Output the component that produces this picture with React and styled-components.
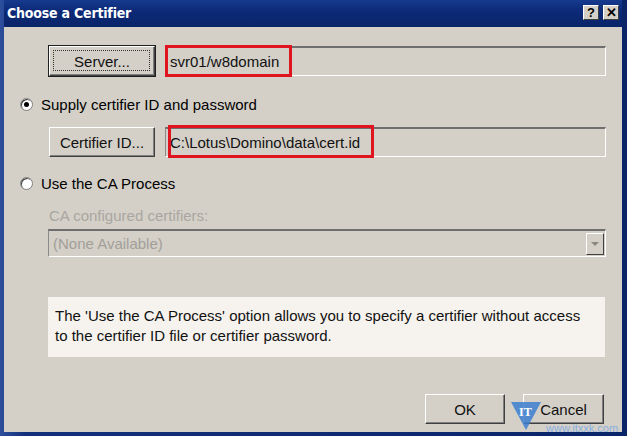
import React from "react";
import styled, { createGlobalStyle } from "styled-components";

const GlobalStyle = createGlobalStyle`
  html, body {
    margin: 0;
    padding: 0;
    background: #0a2468;
  }
  * {
    box-sizing: border-box;
  }
`;

const Window = styled.div`
  width: 627px;
  height: 436px;
  display: flex;
  flex-direction: column;
  padding: 0 5px 4px 4px;
  background: linear-gradient(90deg, #2d4f9c 0%, #12307a 4%, #0a2468 100%);
  font-family: "Liberation Sans", Arial, sans-serif;
  position: relative;
  overflow: hidden;
`;

const TitleBar = styled.div`
  height: 27px;
  display: flex;
  align-items: center;
  justify-content: space-between;
  padding: 0 3px 2px 3px;
  background: linear-gradient(180deg, #163a8e 0%, #0c2a78 40%, #0a2468 100%);
`;

const Title = styled.div`
  color: #fff;
  font-family: "DejaVu Sans Condensed", "Liberation Sans", sans-serif;
  font-weight: bold;
  font-size: 14px;
  letter-spacing: -0.2px;
`;

const TitleButtons = styled.div`
  display: flex;
  gap: 4px;
`;

const CaptionButton = styled.div`
  width: 16px;
  height: 15px;
  background: #d4d0c8;
  border-top: 1px solid #fff;
  border-left: 1px solid #fff;
  border-right: 1px solid #404040;
  border-bottom: 1px solid #404040;
  display: flex;
  align-items: center;
  justify-content: center;
  color: #000;
  font-weight: bold;
  font-size: 13px;
  line-height: 1;
`;

const Client = styled.div`
  flex: 1;
  background: #d4d0c8;
  display: flex;
  flex-direction: column;
  padding: 19px 16px 0 16px;
  font-size: 15px;
  color: #000;
`;

const FieldRow = styled.div`
  display: flex;
  align-items: center;
  gap: 10px;
  padding-left: 29px;
  margin-top: ${(p) => p.$top || 0}px;
`;

const Button = styled.div`
  width: ${(p) => p.$w || 106}px;
  height: 30px;
  display: flex;
  align-items: center;
  justify-content: center;
  background: #d4d0c8;
  font-size: 15px;
  color: #111;
  border-top: 1px solid #fff;
  border-left: 1px solid #fff;
  border-right: 1px solid #404040;
  border-bottom: 1px solid #404040;
  box-shadow: inset -1px -1px 0 #808080;
  position: relative;
  outline: ${(p) => (p.$default ? "1px solid #202020" : "none")};
`;

const FocusRing = styled.span`
  position: absolute;
  inset: 3px 4px 4px 3px;
  border: 1px dotted #333;
`;

const TextField = styled.div`
  flex: 1;
  height: 30px;
  display: flex;
  align-items: center;
  padding-left: 4px;
  background: #d4d0c8;
  border-top: 2px solid #6f6f6f;
  border-left: 1px solid #8a8a8a;
  border-bottom: 1px solid #fff;
  border-right: 1px solid #fff;
  color: #111;
  font-size: 15px;
  position: relative;
`;

const Highlight = styled.span`
  position: absolute;
  left: ${(p) => p.$left}px;
  top: ${(p) => p.$top}px;
  width: ${(p) => p.$w}px;
  height: ${(p) => p.$h}px;
  border: 3px solid #e0141e;
  pointer-events: none;
`;

const RadioRow = styled.div`
  display: flex;
  align-items: center;
  gap: 8px;
  height: 18px;
  margin-top: ${(p) => p.$top}px;
`;

const Radio = styled.span`
  width: 13px;
  height: 13px;
  border-radius: 50%;
  background: #fff;
  border: 1px solid #808080;
  box-shadow: inset 1px 1px 0 #404040;
  display: flex;
  align-items: center;
  justify-content: center;

  &::after {
    content: "";
    width: 5px;
    height: 5px;
    border-radius: 50%;
    background: ${(p) => (p.$checked ? "#000" : "transparent")};
  }
`;

const DisabledLabel = styled.div`
  margin: 16px 0 0 29px;
  height: 16px;
  line-height: 16px;
  color: #a9a6a0;
  font-size: 15px;
`;

const Combo = styled.div`
  margin: 5px 0 0 28px;
  height: 28px;
  display: flex;
  align-items: center;
  justify-content: space-between;
  padding: 0 1px 0 4px;
  border-top: 2px solid #6f6f6f;
  border-left: 1px solid #8a8a8a;
  border-bottom: 1px solid #fff;
  border-right: 1px solid #fff;
  color: #a29f99;
  font-size: 15px;
`;

const DropButton = styled.div`
  width: 18px;
  height: 22px;
  background: #d4d0c8;
  border-top: 1px solid #fff;
  border-left: 1px solid #fff;
  border-right: 1px solid #404040;
  border-bottom: 1px solid #404040;
  display: flex;
  align-items: center;
  justify-content: center;

  &::after {
    content: "";
    border-left: 4px solid transparent;
    border-right: 4px solid transparent;
    border-top: 4px solid #8a8780;
  }
`;

const InfoBox = styled.div`
  margin: 40px 1px 0 28px;
  height: 60px;
  background: #f6f3ee;
  padding: 9px 7px;
  font-size: 15px;
  line-height: 20px;
  color: #111;
`;

const Footer = styled.div`
  margin-top: 37px;
  padding-right: 2px;
  display: flex;
  justify-content: flex-end;
  gap: 18px;
`;

const Watermark = styled.div`
  position: absolute;
  left: 510px;
  top: 400px;
  display: flex;
  align-items: flex-start;
  pointer-events: none;
`;

const WatermarkText = styled.div`
  margin: 22px 0 0 4px;
  color: #8aaee0;
  font-size: 11px;
`;

const ItMark = () => (
  <svg width="32" height="32" viewBox="0 0 32 32">
    <polygon points="1,2 31,2 16,30" fill="#3d7fd0" opacity="0.85" />
    <text x="9" y="16" fontSize="12" fill="#fff" fontFamily="Liberation Serif, serif" fontWeight="bold">
      IT
    </text>
  </svg>
);

export default function App() {
  return (
    <>
      <GlobalStyle />
      <Window>
        <TitleBar>
          <Title>Choose a Certifier</Title>
          <TitleButtons>
            <CaptionButton>?</CaptionButton>
            <CaptionButton>✕</CaptionButton>
          </TitleButtons>
        </TitleBar>
        <Client>
          <FieldRow>
            <Button $default>
              <FocusRing />
              Server...
            </Button>
            <TextField>
              svr01/w8domain
              <Highlight $left={-1} $top={-3} $w={127} $h={32} />
            </TextField>
          </FieldRow>

          <RadioRow $top={19}>
            <Radio $checked />
            Supply certifier ID and password
          </RadioRow>

          <FieldRow $top={14}>
            <Button>Certifier ID...</Button>
            <TextField>
              C:\Lotus\Domino\data\cert.id
              <Highlight $left={2} $top={-4} $w={206} $h={33} />
            </TextField>
          </FieldRow>

          <RadioRow $top={17}>
            <Radio />
            Use the CA Process
          </RadioRow>

          <DisabledLabel>CA configured certifiers:</DisabledLabel>
          <Combo>
            (None Available)
            <DropButton />
          </Combo>

          <InfoBox>
            The 'Use the CA Process' option allows you to specify a certifier without access
            <br />
            to the certifier ID file or certifier password.
          </InfoBox>

          <Footer>
            <Button $w={80}>OK</Button>
            <Button $w={81}>Cancel</Button>
          </Footer>
        </Client>
        <Watermark>
          <ItMark />
          <WatermarkText>www.itxxk.com</WatermarkText>
        </Watermark>
      </Window>
    </>
  );
}
